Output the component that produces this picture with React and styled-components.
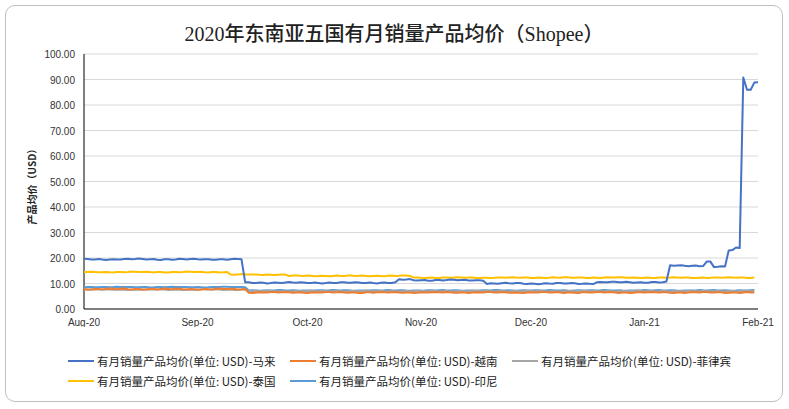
import React from "react";
import styled, { createGlobalStyle } from "styled-components";

const G = createGlobalStyle`body{margin:0;background:#fff;font-family:"Liberation Sans",Arial,sans-serif;}`;
const Card = styled.div`margin:5px 6px 5px 5px;height:397px;border:1px solid #bfbfbf;border-radius:10px;box-sizing:border-box;display:flex;flex-direction:column;align-items:center;`;
const Title = styled.div`font-family:"Liberation Serif","Noto Sans CJK SC",serif;font-size:20px;font-weight:500;color:#222;margin-top:12px;height:26px;`;
const Legend = styled.div`display:grid;grid-template-columns:222px 222px 222px;row-gap:4px;margin-top:26px;align-self:flex-start;margin-left:62px;`;
const Item = styled.div`display:flex;align-items:center;gap:3px;white-space:nowrap;font-family:"Noto Sans CJK SC",sans-serif;font-size:11.5px;color:#222;`;
const Swatch = styled.span`width:26px;height:2px;background:${p=>p.c};`;

const X0=78,X1=752,Y0=310,PX=(X1-X0)/184,PY=2.55;
const x=d=>X0+d*PX, y=v=>Y0-v*PY;
const jit=(i,s)=>Math.sin(i*1.7+s)*0.5+Math.sin(i*0.43+s*2)*0.4;
function series(fn,s,a=0.6,end=184){const p=[];for(let i=0;i<=end;i++)p.push(`${x(i).toFixed(1)},${y(fn(i)+jit(i,s)*a).toFixed(1)}`);return p.join(" ");}
const my=i=>i<44?19.5:i<160?(i>85&&i<90?11.5:i<90?10.3:i<110?11.3:i<140?10:10.5):i<170?17:i<172?18.5:i<176?16.5:i<178?23:i<180?24:i<181?91:i<183?86:89;
const th=i=>i<40?14.5:i<56?13.5:i<90?13:12.3;
const vn=i=>i<45?7.8:6.5;
const ph=i=>i<45?7.6:7;
const id=i=>i<45?8.6:7.3;
const S=[["#4472C4",my,1,0.3,"马来"],["#ED7D31",vn,2,0.25,"越南"],["#A5A5A5",ph,3,0.2,"菲律宾"],["#FFC000",th,4,0.2,"泰国"],["#5B9BD5",id,5,0.15,"印尼"]];
const months=["Aug-20","Sep-20","Oct-20","Nov-20","Dec-20","Jan-21","Feb-21"];const md=[0,31,61,92,122,153,184];

export default function App(){return(<><G/><Card>
<Title>2020年东南亚五国有月销量产品均价（Shopee）</Title>
<svg width="777" height="290" viewBox="0 38 777 290" style={{display:"block",marginTop:-7}}>
{Array.from({length:11},(_,k)=><g key={k}>{k>0&&<line x1={X0} x2={X1} y1={y(k*10)} y2={y(k*10)} stroke="#d9d9d9"/>}<text x={X0-9} y={y(k*10)+4} textAnchor="end" fontSize="10" fill="#333">{(k*10).toFixed(2)}</text></g>)}
<line x1={X0} x2={X0} y1={55} y2={Y0} stroke="#000"/><line x1={X0} x2={X1} y1={Y0} y2={Y0} stroke="#000"/>
{months.map((m,k)=><text key={m} x={x(md[k])} y={327} textAnchor="middle" fontSize="10" fill="#333">{m}</text>)}
<text transform="translate(30,185) rotate(-90)" textAnchor="middle" fontSize="10" fontWeight="bold" fontFamily="Noto Sans CJK SC" fill="#222">产品均价（USD）</text>
{[...S].reverse().map(([c,f,s,a])=><polyline key={c} points={series(f,s,a,c==="#4472C4"?184:183)} fill="none" stroke={c} strokeWidth="2" strokeLinejoin="round"/>)}
</svg>
<Legend>{[0,1,2,3,4].map(k=><Item key={k}><Swatch c={S[k][0]}/>有月销量产品均价(单位: USD)-{S[k][4]}</Item>)}</Legend>
</Card></>);}
